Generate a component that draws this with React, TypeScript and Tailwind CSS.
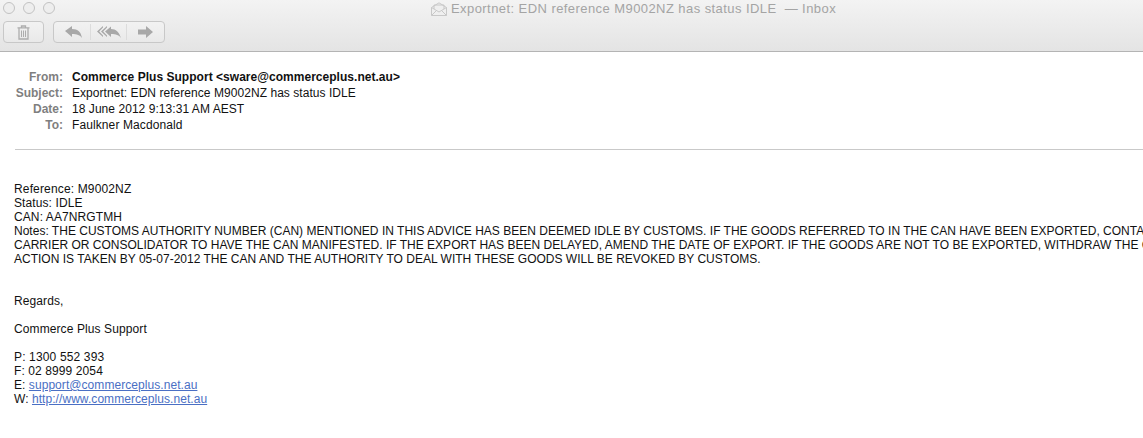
const sans = { fontFamily: '"Liberation Sans", Arial, sans-serif' };

function Light() {
  return <span className="block w-[12px] h-[12px] rounded-full border border-[#c2c2c2] bg-[#eeeeee]" />;
}

export default function App() {
  const header = [
    ["From:", "Commerce Plus Support <sware@commerceplus.net.au>", "font-bold tracking-[0.03px]"],
    ["Subject:", "Exportnet: EDN reference M9002NZ has status IDLE", "tracking-[0.05px]"],
    ["Date:", "18 June 2012 9:13:31 AM AEST", "tracking-[0.05px]"],
    ["To:", "Faulkner Macdonald", "tracking-[0.1px]"],
  ] as const;
  return (
    <div className="w-[1143px] h-[438px] overflow-hidden bg-white flex flex-col" style={sans}>
      <div className="h-[52px] shrink-0 border-b border-[#b4b4b4] bg-gradient-to-b from-[#f3f3f3] to-[#e4e4e4] flex flex-col pl-[3px]">
        <div className="h-[21px] flex relative">
          <div className="flex gap-[8px] pt-[2px]"><Light /><Light /><Light /></div>
          <div className="absolute left-[428px] top-[1px] flex items-center gap-[4px] text-[13px] leading-[16px] text-[#a4a4a4] whitespace-nowrap tracking-[0.43px]">
            <svg width="16" height="14" viewBox="0 0 16 14" fill="none" stroke="#c8c8c8">
              <path d="M.5 5.500 8 .8l7.500 4.700v8H.5z" fill="#efefef" />
              <path d="M3 7V3h10v4M.5 13.500 6 8M15.500 13.500 10 8M.5 5.500 8 10l7.500-4.500" />
            </svg>
            <span>Exportnet: EDN reference M9002NZ has status IDLE&nbsp; — Inbox</span>
          </div>
        </div>
        <div className="flex gap-[9px]">
          <div className="w-[41px] h-[22px] rounded-[4px] border border-[#c8c8c8] bg-gradient-to-b from-[#f2f2f2] to-[#e9e9e9] flex items-center justify-center">
            <svg width="13" height="15" viewBox="0 0 13 15" fill="none" stroke="#adadad" strokeWidth="1.300">
              <path d="M.5 2.800h12M4.500 2.500V1h4v1.500M2 3v11h9V3" />
              <path d="M4.500 5.500V12M6.500 5.500V12M8.500 5.500V12" strokeWidth="1" />
            </svg>
          </div>
          <div className="w-[112px] h-[22px] rounded-[4px] border border-[#c8c8c8] bg-gradient-to-b from-[#f2f2f2] to-[#e9e9e9] flex items-center">
            <div className="w-[37px] h-[16px] border-r border-[#dcdcdc] flex items-center justify-center pl-[3px]">
              <svg width="18" height="12" viewBox="0 0 18 12" fill="#a8a8a8">
                <path d="M0 5 7 0v3c6 0 9 3 10 9-2-3-5-4-10-4v3z" />
              </svg>
            </div>
            <div className="w-[36px] h-[16px] border-r border-[#dcdcdc] flex items-center justify-center">
              <svg width="24" height="12" viewBox="0 0 24 12" fill="#a8a8a8">
                <path d="M0 5.500 6 0v1.600L2.200 5.500 6 9.400V11z" />
                <path d="M4 5.500 10 0v1.600L6.200 5.500 10 9.400V11z" />
                <path d="M8 5.500 14 .5V3c5 0 8 3 10 9-2-3-5-4-10-4v3z" />
              </svg>
            </div>
            <div className="flex-1 flex items-center justify-center">
              <svg width="15" height="12" viewBox="0 0 15 12" fill="#a8a8a8">
                <path d="M0 3.500h8V0l7 6-7 6V8.500H0z" />
              </svg>
            </div>
          </div>
        </div>
      </div>

      <div className="pt-[17px] flex flex-col">
        {header.map(([label, value, cls]) => (
          <div key={label} className="h-[16px] flex text-[12px] leading-[16px] whitespace-nowrap">
            <div className="w-[63px] text-right font-bold text-[#7f7f7f]">{label}</div>
            <div className={"ml-[9px] text-[#111111] " + cls}>{value}</div>
          </div>
        ))}
      </div>

      <div className="ml-[15px] mt-[16px] h-px bg-[#c9c9c9] shrink-0" />

      <div className="pl-[14px] pt-[32px] text-[12px] leading-[14px] text-[#111111] whitespace-nowrap overflow-hidden tracking-[0.1px]">
        <div className="tracking-[0.15px]">Reference: M9002NZ</div>
        <div>Status: IDLE</div>
        <div>CAN: AA7NRGTMH</div>
        <div className="tracking-[0.01px]">Notes: THE CUSTOMS AUTHORITY NUMBER (CAN) MENTIONED IN THIS ADVICE HAS BEEN DEEMED IDLE BY CUSTOMS. IF THE GOODS REFERRED TO IN THE CAN HAVE BEEN EXPORTED, CONTACT THE</div>
        <div className="tracking-[0.01px]">CARRIER OR CONSOLIDATOR TO HAVE THE CAN MANIFESTED. IF THE EXPORT HAS BEEN DELAYED, AMEND THE DATE OF EXPORT. IF THE GOODS ARE NOT TO BE EXPORTED, WITHDRAW THE CAN</div>
        <div className="tracking-[0.01px]">ACTION IS TAKEN BY 05-07-2012 THE CAN AND THE AUTHORITY TO DEAL WITH THESE GOODS WILL BE REVOKED BY CUSTOMS.</div>
        <div className="mt-[28px]">Regards,</div>
        <div className="mt-[14px]">Commerce Plus Support</div>
        <div className="mt-[14px] tracking-[0.15px]">P: 1300 552 393</div>
        <div>F: 02 8999 2054</div>
        <div className="tracking-[0.06px]">E: <a className="text-[#4a6fc4] underline">support@commerceplus.net.au</a></div>
        <div className="tracking-[0.06px]">W: <a className="text-[#4a6fc4] underline">http://www.commerceplus.net.au</a></div>
      </div>
    </div>
  );
}
